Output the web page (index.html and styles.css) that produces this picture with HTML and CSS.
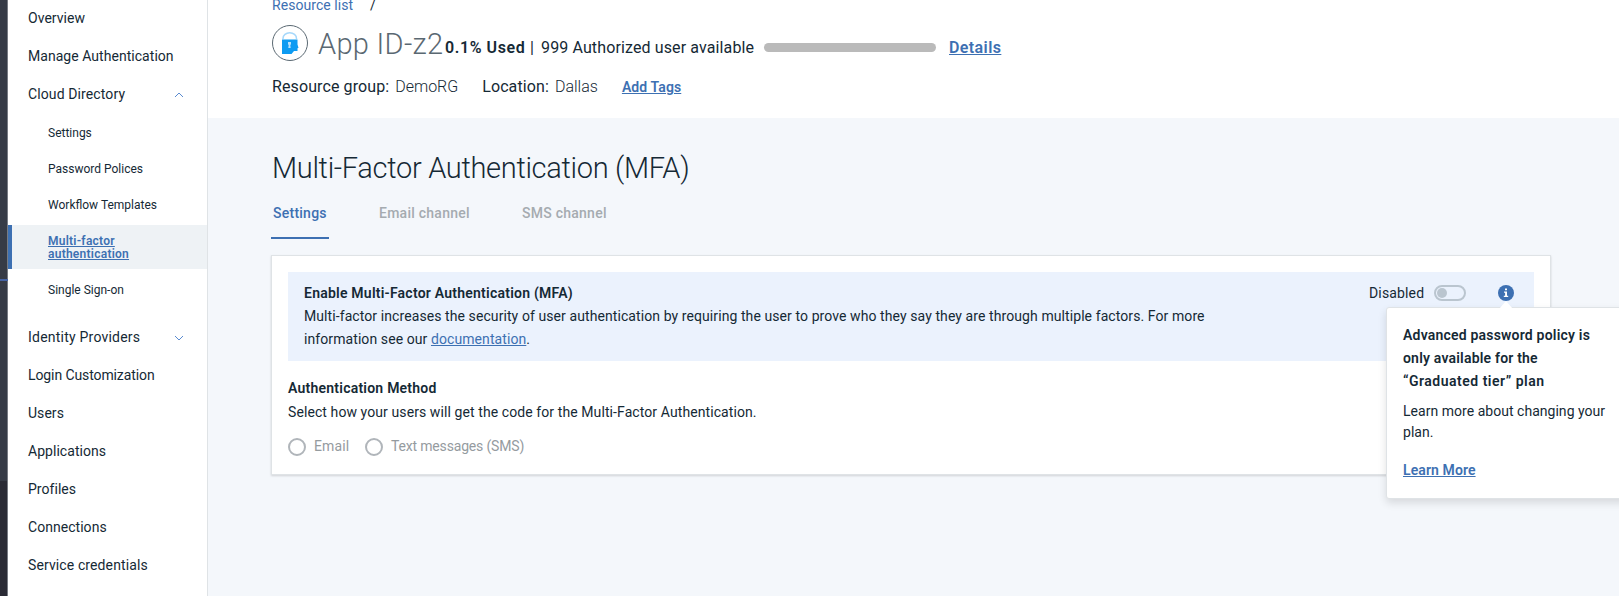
FILE: index.html
```html
<!DOCTYPE html>
<html lang="en">
<head>
<meta charset="utf-8">
<title>App ID</title>
<link rel="stylesheet" href="styles.css">
</head>
<body>
<div class="app">
  <div class="rail"><div class="rail-top"></div><div class="rail-mid"></div><div class="rail-end"></div></div>
  <nav class="sidebar">
    <a class="item">Overview</a>
    <a class="item">Manage Authentication</a>
    <a class="item wide">Cloud Directory
      <svg class="chev" width="10" height="6" viewBox="0 0 10 6"><path d="M1 5 5 1 9 5"/></svg></a>
    <div class="sub">
      <a class="subitem">Settings</a>
      <a class="subitem">Password Polices</a>
      <a class="subitem">Workflow Templates</a>
      <a class="subitem active"><span>Multi-factor<br>authentication</span></a>
      <a class="subitem">Single Sign-on</a>
    </div>
    <a class="item wider">Identity Providers
      <svg class="chev" width="10" height="6" viewBox="0 0 10 6"><path d="M1 1 5 5 9 1"/></svg></a>
    <a class="item narrow">Login Customization</a>
    <a class="item">Users</a>
    <a class="item">Applications</a>
    <a class="item">Profiles</a>
    <a class="item">Connections</a>
    <a class="item wide">Service credentials</a>
  </nav>
  <main class="main">
    <header class="header">
      <div class="crumbs"><a class="crumb">Resource list</a><span>/</span></div>
      <div class="titlebar">
        <svg class="logo" width="36" height="36" viewBox="0 0 36 36">
          <circle cx="18" cy="18" r="17.5" fill="#fff" stroke="#5a6872"/>
          <path d="M11 14v-.500a6.700 5.700 0 0 1 13.500 0V14" fill="none" stroke="#a6d8fb" stroke-width="1.500"/>
          <path d="M10 14.500h15.500v5l1 3.300-1 .4v2.800h-3.500l-2.500 3H10z" fill="#0d9bf2"/>
          <path d="M16 17h3v2.300l-.7.700.4 3h-2.400l.4-3-.7-.7z" fill="#b9e1fc"/>
        </svg>
        <h1 class="name">App ID-z2</h1>
        <b class="used">0.1% Used</b>
        <span class="avail"><span class="pipe">|</span>999 Authorized user available</span>
        <div class="meter"></div>
        <a class="link details">Details</a>
      </div>
      <div class="meta">
        <span class="key">Resource group:</span><span class="val group">DemoRG</span>
        <span class="key">Location:</span><span class="val place">Dallas</span>
        <a class="link tags">Add Tags</a>
      </div>
    </header>
    <section class="content">
      <h2 class="heading">Multi-Factor Authentication (MFA)</h2>
      <div class="tabs">
        <a class="tab on">Settings</a>
        <a class="tab email">Email channel</a>
        <a class="tab">SMS channel</a>
      </div>
      <div class="card">
        <div class="banner">
          <div class="copy">
            <h3 class="bold">Enable Multi-Factor Authentication (MFA)</h3>
            <p class="desc">Multi-factor increases the security of user authentication by requiring the user to prove who they say they are through multiple factors. For more<br>information see our <a class="doc">documentation</a>.</p>
          </div>
          <div class="controls">
            <span class="state">Disabled</span>
            <span class="toggle"><i class="knob"></i></span>
            <div class="info">
              <svg width="16" height="16" viewBox="0 0 16 16"><circle cx="8" cy="8" r="8" fill="#3d70b2"/><path d="M7 3.600h2v1.700H7zM6 6.500h3v4.300h1.200V12H5.800v-1.200h1.300V7.700H6z" fill="#fff"/></svg>
              <div class="popover">
                <svg class="arrow" width="14" height="8" viewBox="0 0 14 8"><path d="M0 8 7 0l7 8z"/></svg>
                <h4 class="pop-title">Advanced password policy is<br>only available for the<br><span class="tier">“Graduated tier” plan</span></h4>
                <p class="pop-text">Learn more about changing your<br>plan.</p>
                <a class="link learn">Learn More</a>
              </div>
            </div>
          </div>
        </div>
        <div class="method">
          <h3 class="bold">Authentication Method</h3>
          <p class="select">Select how your users will get the code for the Multi-Factor Authentication.</p>
          <div class="radios">
            <i class="radio"></i><span class="opt first">Email</span>
            <i class="radio"></i><span class="opt">Text messages (SMS)</span>
          </div>
        </div>
      </div>
    </section>
  </main>
</div>
</body>
</html>
```
FILE: styles.css
```css
* { box-sizing: border-box; margin: 0; padding: 0; }
body {
  height: 596px;
  overflow: hidden;
  font-family: Roboto, "Noto Sans", sans-serif;
  font-size: 14px;
  color: #152935;
}
.app { display: flex; width: 1619px; height: 596px; overflow: hidden; }

.rail { width: 8px; display: flex; flex-direction: column; background: #363b46; border-right: 1px solid #777b83; flex: none; }
.rail-top { height: 279px; background: #363b46; }
.rail-mid { height: 2px; background: #4563a3; margin-right: -1px; }
.rail-end { height: 315px; background: linear-gradient(#363b46 200px, #2a2b35 200px); }

.sidebar { width: 200px; flex: none; background: #fff; border-right: 1px solid #dfe3e6; margin-top: -1px; }
.item { display: flex; align-items: center; justify-content: space-between; height: 38px; padding: 0 23px 0 20px; letter-spacing: .04px; }
.wide { letter-spacing: .11px; }
.wider { letter-spacing: .22px; }
.narrow { letter-spacing: -.1px; }
.chev { fill: none; stroke: #5a8bd0; margin-top: 2px; }
.sub { padding: 2px 0 10px; }
.subitem { display: flex; align-items: center; height: 36px; padding-left: 40px; font-size: 12px; }
.active { height: 44px; margin: 2px 0 3px; padding: 2px 0 0 36px; border-left: 4px solid #3d70b2; background: #eef2f5; color: #3d70b2; font-weight: 600; line-height: 13px; letter-spacing: .25px; text-decoration: underline; }

.main { flex: 1; min-width: 0; background: #f4f7fb; }
.header { display: flow-root; height: 118px; padding-left: 64px; background: #fff; }
.crumbs { display: flex; gap: 17px; height: 25px; line-height: 16px; margin-top: -3px; }
.crumb { color: #3d70b2; letter-spacing: .05px; }
.titlebar { display: flex; align-items: center; height: 42px; font-size: 16px; white-space: nowrap; }
.logo { flex: none; }
.name { width: 126px; margin: 2px 0 0 10px; font-size: 29px; font-weight: 300; color: #5a6872; letter-spacing: .3px; }
.used { font-weight: 600; width: 86px; margin-top: 8px; padding-left: 1px; letter-spacing: .6px; }
.avail { width: 234px; margin-top: 8px; letter-spacing: .12px; }
.pipe { margin-right: 7px; }
.meter { width: 172px; height: 9px; border-radius: 5px; background: #bababa; margin-top: 9px; }
.link { color: #3d70b2; font-weight: 600; text-decoration: underline; }
.details { margin: 8px 0 0 13px; letter-spacing: .4px; }
.meta { display: flex; align-items: center; margin-top: 10px; height: 24px; font-size: 16px; white-space: nowrap; }
.key { letter-spacing: .1px; margin-right: 6px; }
.val { font-weight: 300; }
.group { width: 87px; }
.place { width: 67px; }
.tags { margin-top: 1px; font-size: 14px; letter-spacing: .1px; }

.content { padding: 30px 0 0 63px; }
.heading { height: 41px; line-height: 40px; font-size: 29px; font-weight: 300; letter-spacing: -.31px; padding-left: 1px; }
.tabs { display: flex; height: 50px; }
.tab { height: 50px; padding-top: 16px; line-height: 16px; font-weight: 500; color: #a5abb0; letter-spacing: .25px; }
.on { width: 58px; margin-right: 50px; padding-left: 2px; color: #3d70b2; border-bottom: 2px solid #3d70b2; }
.email { width: 143px; }
.card { width: 1280px; height: 220px; margin-top: 16px; padding: 16px; background: #fff; border: 1px solid #dfe3e6; box-shadow: 0 1px 2px rgba(0,0,0,.15); }
.banner { display: flex; justify-content: space-between; height: 89px; padding: 10px 20px 0 16px; background: #ebf2fd; line-height: 23px; white-space: nowrap; }
.bold { font-size: 14px; font-weight: 600; line-height: 23px; letter-spacing: .23px; }
.desc { letter-spacing: .085px; }
.doc { color: #3d70b2; text-decoration: underline; }
.controls { display: flex; align-items: center; height: 22px; }
.state { width: 65px; letter-spacing: .15px; }
.toggle { display: flex; align-items: center; width: 32px; height: 16px; padding-left: 1px; border: 2px solid #bac5cf; border-radius: 8px; margin-right: 32px; }
.knob { width: 10px; height: 10px; border-radius: 50%; background: #bac5cf; }
.info { position: relative; width: 16px; height: 16px; }
.info svg { display: block; }
.popover { position: absolute; left: -112px; top: 22px; width: 250px; height: 192px; padding: 16px; background: #fff; border: 1px solid #dfe3e6; border-radius: 3px; box-shadow: 0 4px 8px rgba(0,0,0,.12); }
.arrow { position: absolute; left: 112px; top: -7px; fill: #fff; }
.pop-title { font-size: 14px; font-weight: 600; line-height: 23px; letter-spacing: .2px; }
.tier { letter-spacing: .5px; }
.pop-text { margin-top: 8px; line-height: 21px; letter-spacing: .03px; }
.learn { display: block; margin-top: 17px; line-height: 21px; letter-spacing: .1px; }
.method { padding-top: 16px; }
.select { line-height: 24px; letter-spacing: .09px; }
.radios { display: flex; align-items: center; height: 24px; margin-top: 11px; color: #959b9f; }
.opt { margin-top: -2px; letter-spacing: -.17px; }
.radio { width: 18px; height: 18px; border: 2px solid #b0b5ba; border-radius: 50%; margin-right: 8px; }
.first { width: 51px; letter-spacing: .15px; }
```
